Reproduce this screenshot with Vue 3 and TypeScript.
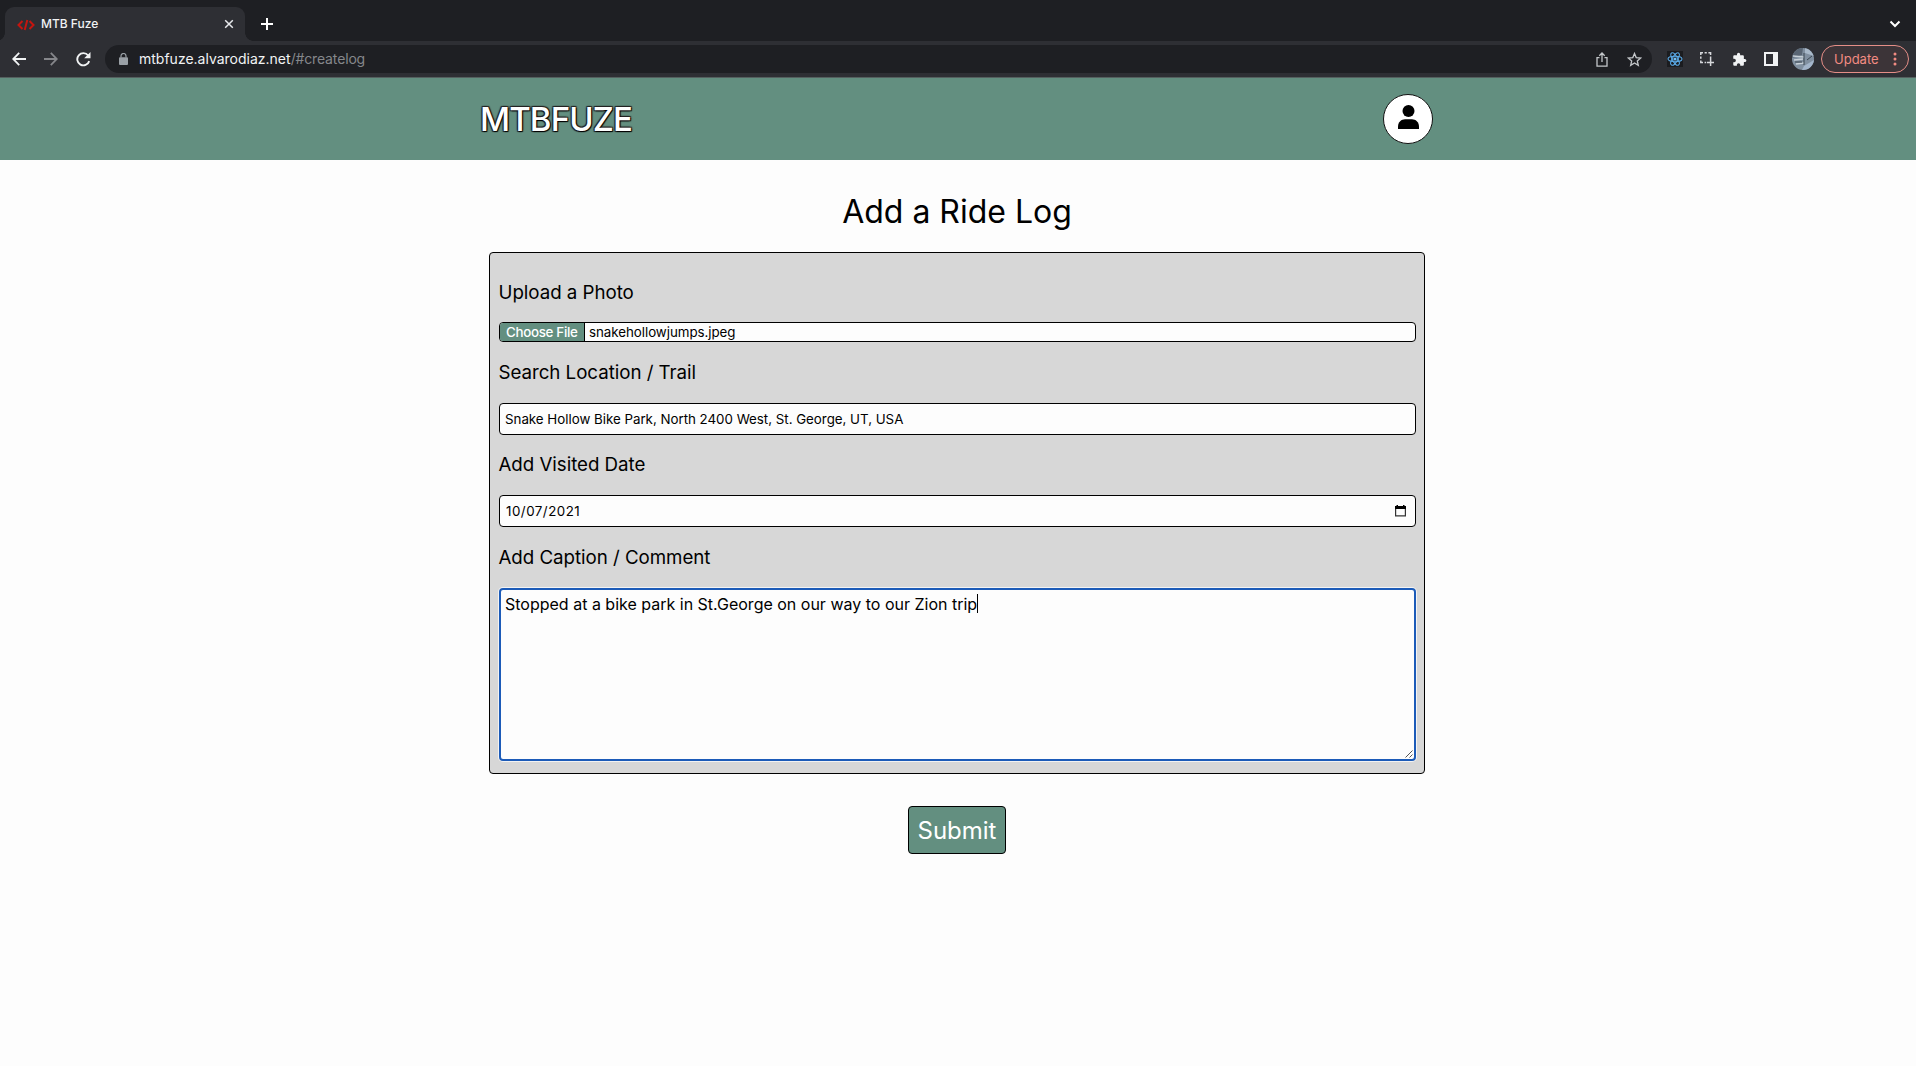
<script setup lang="ts">
import { ref } from 'vue'

const fileName = ref('snakehollowjumps.jpeg')
const location = ref('Snake Hollow Bike Park, North 2400 West, St. George, UT, USA')
const visitedDate = ref('10/07/2021')
const comment = ref('Stopped at a bike park in St.George on our way to our Zion trip')
</script>

<template>
  <div class="window">
    <div class="tabstrip">
      <div class="tab">
        <svg class="favicon" width="18" height="12" viewBox="0 0 18 12" fill="none" stroke="#c4150f" stroke-width="2">
          <path d="M5.5 2 1.5 6l4 4M12.500 2l4 4-4 4M10.300 1 7.700 11" />
        </svg>
        <span class="tab-title">MTB Fuze</span>
        <svg class="tab-close" width="10" height="10" viewBox="0 0 10 10" stroke="#e8eaed" stroke-width="1.500">
          <path d="M1.200 1.200l7.600 7.600M8.800 1.200 1.200 8.800" />
        </svg>
      </div>
      <svg class="new-tab" width="12" height="12" viewBox="0 0 12 12" stroke="#fff" stroke-width="2"><path d="M6 0v12M0 6h12" /></svg>
      <svg class="tab-search" width="12" height="8" viewBox="0 0 12 8" fill="none" stroke="#fff" stroke-width="2"><path d="M1.500 1.500 6 6l4.500-4.500" /></svg>
    </div>

    <div class="toolbar">
      <svg class="back" width="14" height="14" viewBox="0 0 14 14" fill="none" stroke="#f1f3f4" stroke-width="1.800"><path d="M14 7H1.500M7.200 .8 1.200 7l6 6.200" /></svg>
      <svg class="forward" width="14" height="14" viewBox="0 0 14 14" fill="none" stroke="#85868a" stroke-width="1.800"><path d="M0 7h12.500M6.800.8l6 6.200-6 6.200" /></svg>
      <svg class="reload" width="15" height="15" viewBox="0 0 15 15" fill="none"><path d="M13.200 9.100A6.100 6.100 0 1 1 12.200 3.500" stroke="#f1f3f4" stroke-width="1.900" /><path d="M14.500 0v6.300H8.200z" fill="#f1f3f4" /></svg>
      <div class="omnibox">
        <svg class="lock" width="9" height="12" viewBox="0 0 9 12"><rect x="0" y="4.200" width="9" height="7.800" rx="1" fill="#9aa0a6" /><path d="M2 4.500V3a2.500 2.500 0 0 1 5 0v1.500" fill="none" stroke="#9aa0a6" stroke-width="1.200" /></svg>
        <span class="url">mtbfuze.alvarodiaz.net<span class="path">/#createlog</span></span>
        <svg class="share" width="12" height="15" viewBox="0 0 12 15" fill="none" stroke="#c4c7ca" stroke-width="1.300"><path d="M3.500 5.600H1v8.500h10V5.600H8.500M6 10V1.200M3.300 3.700 6 1l2.700 2.700" /></svg>
        <svg class="star" width="15" height="15" viewBox="0 0 15 15" fill="none" stroke="#c4c7ca" stroke-width="1.300"><path d="m7.500 1.500 1.700 4.100 4.500.4-3.400 2.900 1 4.400-3.800-2.300-3.800 2.300 1-4.400L1.300 6l4.500-.4z" /></svg>
      </div>
      <svg class="react" width="16" height="16" viewBox="0 0 16 16"><rect width="16" height="16" fill="#1b1c1f" /><g fill="none" stroke="#5aa9e6" stroke-width="1.100"><ellipse cx="8" cy="8" rx="7" ry="2.700" /><ellipse cx="8" cy="8" rx="7" ry="2.700" transform="rotate(60 8 8)" /><ellipse cx="8" cy="8" rx="7" ry="2.700" transform="rotate(120 8 8)" /></g><circle cx="8" cy="8" r="1.600" fill="#72bff5" /></svg>
      <svg class="capture" width="14" height="14" viewBox="0 0 14 14" fill="none" stroke="#d6d8db" stroke-width="1.500"><path d="M.8 3V.8H3M4.600.8h2.200M8.400.8h2.200V3M.8 4.600v2.200M.8 8.400v2.200H3M4.600 10.600h1.600M10.600 4.600v9.400M7 10.600h7" /></svg>
      <svg class="puzzle" width="15" height="15" viewBox="0 0 24 24" fill="#f1f3f4"><path d="M20.500 11H19V7c0-1.100-.9-2-2-2h-4V3.500a2.500 2.500 0 0 0-5 0V5H4c-1.100 0-2 .9-2 2v3.800h1.500a2.700 2.700 0 0 1 0 5.400H2V20c0 1.100.9 2 2 2h3.800v-1.500a2.700 2.700 0 0 1 5.400 0V22H17c1.100 0 2-.9 2-2v-4h1.500a2.500 2.500 0 0 0 0-5z" /></svg>
      <svg class="panel" width="14" height="14" viewBox="0 0 14 14"><path fill="#f1f3f4" fill-rule="evenodd" d="M0 0h14v14H0zM2 2v10h7V2z" /></svg>
      <svg class="avatar" width="22" height="22" viewBox="0 0 22 22">
        <defs><clipPath id="face"><circle cx="11" cy="11" r="11" /></clipPath></defs>
        <g clip-path="url(#face)">
          <rect width="22" height="22" fill="#8190a0" />
          <path d="M0 0h11l-1 7-10 3z" fill="#596573" /><path d="M13 0h9v8l-9-3z" fill="#a9b9c9" />
          <path d="M1 8l11 1M2 12l9-1M4 16l8-1" stroke="#c7d0d7" stroke-width="1.500" />
          <path d="M12 5v12M3 14l7 0M15 12l5-4" stroke="#3b4651" stroke-width="1" /><path d="M12 18l10-6v10H10z" fill="#a3b5ca" />
        </g>
      </svg>
      <div class="update"><span>Update</span><svg width="4" height="14" viewBox="0 0 4 14" fill="#f28b82"><circle cx="2" cy="2" r="1.500" /><circle cx="2" cy="7" r="1.500" /><circle cx="2" cy="12" r="1.500" /></svg></div>
    </div>

    <header class="header">
      <div class="brand">MTBFUZE</div>
      <div class="profile"><svg width="21" height="24" viewBox="0 0 21 24"><circle cx="10.500" cy="6" r="6" /><path d="M0 24v-2.500C0 17 3.500 14.200 7 14.200h7c3.500 0 7 2.800 7 7.300V24z" /></svg></div>
    </header>

    <main class="content">
      <h1>Add a Ride Log</h1>
      <form class="card" @submit.prevent>
        <h2 class="first">Upload a Photo</h2>
        <div class="field file"><span class="choose">Choose File</span><span class="filename">{{ fileName }}</span></div>
        <h2>Search Location / Trail</h2>
        <div class="field"><span class="location">{{ location }}</span></div>
        <h2 class="visited">Add Visited Date</h2>
        <div class="field date">
          <span class="day">{{ visitedDate }}</span>
          <svg width="11" height="12" viewBox="0 0 11 12"><path d="M.6 2h9.800v8.800H.6z" fill="none" stroke="#333" stroke-width="1.200" /><path d="M0 1h1.500V0H3v1h5V0h1.500v1H11v3H0z" /></svg>
        </div>
        <h2>Add Caption / Comment</h2>
        <div class="comment">
          <span class="comment-text">{{ comment }}</span><i class="caret"></i>
          <svg class="grip" width="8" height="8" viewBox="0 0 8 8" stroke="#555" stroke-width="1"><path d="M.5 7.500l7-7M4.500 7.500l3-3" /></svg>
        </div>
      </form>
      <button class="submit" type="button">Submit</button>
    </main>
  </div>
</template>

<style>
body { margin: 0; background: #fdfdfd; }
</style>

<style scoped>
.window { width: 1916px; height: 1066px; overflow: hidden; background: #fdfdfd; color: #000; font-family: Inter, "Liberation Sans", sans-serif; }
.window * { box-sizing: border-box; }
.window svg { display: block; flex: none; }
.window span { white-space: nowrap; }

.tabstrip { height: 41px; padding: 7px 15px 0 5px; display: flex; background: #1e1f23; }
.tab { position: relative; width: 240px; height: 34px; padding: 0 12px 0; display: flex; align-items: center; background: #2e2f34; border-radius: 9px 9px 0 0; }
.tab::before, .tab::after { content: ""; position: absolute; bottom: 0; width: 8px; height: 8px; }
.tab::before { left: -8px; background: radial-gradient(circle at 0 0, #1e1f23 7.5px, #2e2f34 8px); }
.tab::after { right: -8px; background: radial-gradient(circle at 100% 0, #1e1f23 7.5px, #2e2f34 8px); }
.favicon { margin-top: 1px; }
.tab-title { margin-left: 6px; color: #f1f3f4; font-size: 12px; line-height: 16px; font-weight: 500; }
.tab-close { margin-left: auto; margin-right: -1px; }
.new-tab { margin: 11px 0 0 16px; }
.tab-search { margin: 13px 0 0 auto; }

.toolbar { height: 37px; padding: 4px 6px 4px 12px; display: flex; align-items: center; background: #2e2f34; border-bottom: 1px solid #55605f; }
.forward { margin-left: 18px; }
.reload { margin-left: 18px; }
.omnibox { width: 1547px; height: 28px; margin-left: 14px; padding: 0 10px 0 14px; display: flex; align-items: center; background: #1e1f23; border-radius: 14px; }
.url { margin-left: 11px; color: #f1f3f4; font-size: 14px; line-height: 18px; }
.path { color: #85878b; letter-spacing: -0.15px; }
.share { margin-left: auto; }
.star { margin-left: 19px; }
.react { margin-left: 15px; }
.capture { margin-left: 17px; }
.puzzle { margin-left: 18px; }
.panel { margin-left: 17px; }
.avatar { margin-left: 14px; }
.update { width: 88px; height: 28px; margin-left: 7px; padding: 0 11px 0 12px; display: flex; align-items: center; justify-content: space-between; border: 1px solid #e58e87; border-radius: 14px; background: #3c3438; color: #f28b82; font-size: 13px; }

.header { height: 82px; padding: 0 483px 0 480px; display: flex; align-items: center; justify-content: space-between; background: #638f80; }
.brand { color: #fff; font-size: 33px; line-height: 40px; font-weight: 500; letter-spacing: -0.9px; text-shadow: 1px 1px 1px #000, -1px 1px 1px #222, 1px -1px 1px #222, -1px -1px 1px #222; }
.profile { width: 50px; height: 50px; padding-bottom: 5px; display: flex; align-items: center; justify-content: center; background: #fff; border: 1px solid #111; border-radius: 50%; }

.content { display: flex; flex-direction: column; align-items: center; padding-right: 2px; }
h1 { height: 40px; margin: 32px 0 20px; font-size: 32px; line-height: 40px; font-weight: 400; }
.card { width: 936px; height: 522px; padding: 0 8px 0 9px; background: #d7d7d7; border: 1px solid #000; border-radius: 4px; }
h2 { height: 24px; margin: 19px 0 18px; font-size: 18.72px; line-height: 24px; font-weight: 400; letter-spacing: -0.03px; text-indent: -0.5px; }
h2.first { margin: 28px 0 17px; }
h2.visited { margin-top: 18px; }
.field { height: 32px; padding: 0 5px; display: flex; align-items: center; background: #fdfdfd; border: 1px solid #000; border-radius: 4px; font-size: 13.333px; line-height: 18px; }
.location { letter-spacing: -0.015px; }
.file { height: 20px; padding: 0; overflow: hidden; }
.choose { width: 85px; height: 18px; padding-left: 6px; background: #638f80; color: #fff; border-right: 1px solid #000; font-weight: 500; letter-spacing: -0.3px; }
.filename { margin-left: 4px; letter-spacing: -0.04px; }
.date { justify-content: space-between; padding: 0 9px 0 6px; }
.day { letter-spacing: 0.5px; }
.comment { position: relative; height: 173px; padding: 4px; display: flex; align-items: flex-start; background: #fdfdfd; border: 2px solid #1c5bb8; border-radius: 4px; box-shadow: 0 0 0 1px #f3f3f3; font-size: 16px; line-height: 20px; }
.caret { width: 1px; height: 19px; background: #000; }
.grip { position: absolute; right: 1px; bottom: 1px; }
.submit { width: 98px; height: 48px; margin-top: 32px; padding: 1px 0 0; background: #638f80; border: 1px solid #000; border-radius: 4px; color: #fff; font: 400 24px/46px Inter, "Liberation Sans", sans-serif; }
</style>
